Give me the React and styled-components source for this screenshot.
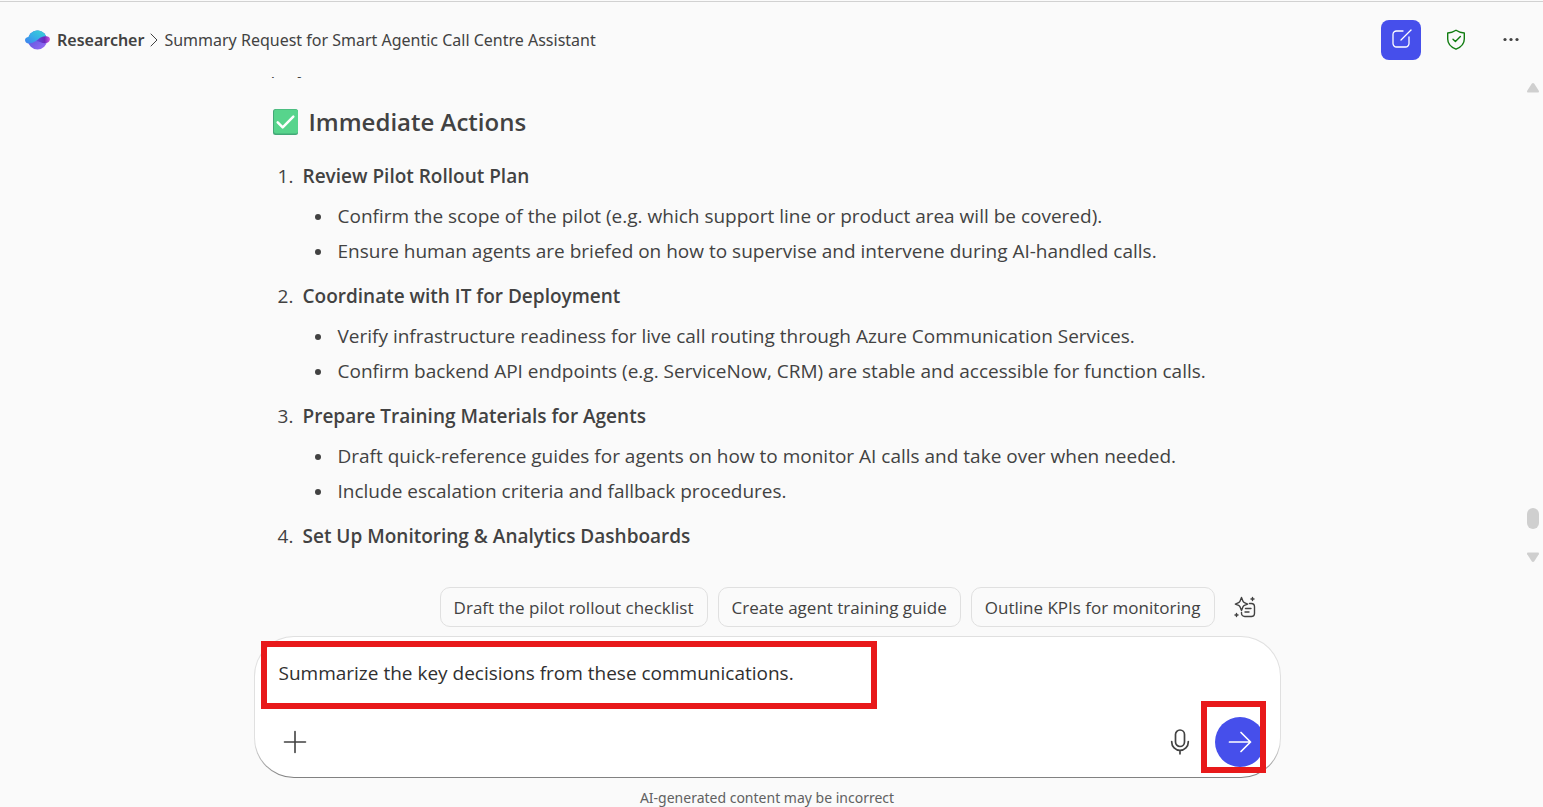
import React, { useState } from "react";
import styled, { createGlobalStyle } from "styled-components";

const GlobalStyle = createGlobalStyle`
  *, *::before, *::after { box-sizing: border-box; }
  body {
    margin: 0;
    background: #fafafa;
    color: #424242;
    font-family: "Segoe UI", "Open Sans", "Noto Sans", sans-serif;
    font-size: 19px;
    line-height: 30px;
  }
  button { font: inherit; color: inherit; cursor: pointer; }
`;

const Shell = styled.div`
  display: flex;
  flex-direction: column;
  height: 100vh;
  padding-top: 1px;
  overflow: hidden;
`;

const Header = styled.header`
  display: flex;
  align-items: center;
  justify-content: space-between;
  height: 76px;
  flex: none;
  padding: 0 12px 0 24px;
  border-top: 1px solid #d1d1d1;
`;

const Breadcrumb = styled.nav`
  display: flex;
  align-items: center;
  font-family: "Segoe UI", "Noto Sans", sans-serif;
  font-size: 16px;
  line-height: 24px;
  white-space: nowrap;
`;

const AgentLink = styled.a`
  display: flex;
  align-items: center;
  gap: 7px;
  color: inherit;
  font-weight: 600;
  text-decoration: none;
`;

const Chevron = styled.svg`
  width: 8px;
  height: 14px;
  margin: 0 6px;
`;

const ChatTitle = styled.h1`
  margin: 0;
  font-size: inherit;
  font-weight: 400;
`;

const HeaderActions = styled.div`
  display: flex;
  gap: 15px;
`;

const IconButton = styled.button`
  display: grid;
  place-items: center;
  width: ${(p) => p.$size || 40}px;
  height: ${(p) => p.$size || 40}px;
  padding: 0;
  border: 0;
  border-radius: ${(p) => (p.$round ? "50%" : "8px")};
  background: ${(p) => (p.$primary ? "#464feb" : "transparent")};
  color: ${(p) => (p.$primary ? "#ffffff" : p.$tint || "#424242")};
`;

const Body = styled.div`
  display: flex;
  flex: 1;
  min-height: 0;
`;

const Transcript = styled.main`
  flex: 1;
  min-width: 0;
  overflow: hidden;
  padding-left: 11px;
`;

const Column = styled.div`
  position: relative;
  width: 100%;
  max-width: 1027px;
  margin: 0 auto;
`;

const Message = styled.article`
  padding: 0 17px;
`;

const PreviousLine = styled.p`
  margin: -25px 0 0;
`;

const SectionTitle = styled.h2`
  display: flex;
  align-items: center;
  gap: 11px;
  margin: 21px 0 20px;
  padding-left: 2px;
  font-size: 24px;
  font-weight: 600;
  line-height: 38px;
`;

const Steps = styled.ol`
  display: grid;
  gap: 15px;
  margin: 0;
  padding: 0 0 0 7px;
  list-style: none;
  counter-reset: step;
`;

const Step = styled.li`
  display: grid;
  grid-template-columns: 25px 1fr;
  counter-increment: step;
  &::before { content: counter(step) "."; }
`;

const StepTitle = styled.h3`
  margin: 0;
  font-size: inherit;
  font-weight: 600;
`;

const Points = styled.ul`
  display: grid;
  gap: 5px;
  margin: 10px 0 0;
  padding: 0 0 0 12px;
  list-style: none;
`;

const Point = styled.li`
  display: grid;
  grid-template-columns: 23px 1fr;
  align-items: start;
  &::before {
    content: "";
    width: 6px;
    height: 6px;
    margin-top: 13px;
    border-radius: 50%;
    background: #424242;
  }
`;

const ScrollRail = styled.div`
  display: flex;
  flex-direction: column;
  align-items: center;
  width: 20px;
  flex: none;
  padding: 5px 0 4px;
`;

const ScrollThumb = styled.div`
  width: 12px;
  height: 21px;
  margin: auto 0 23px;
  border-radius: 6px;
  background: #cfcfcf;
`;

const Footer = styled.footer`
  flex: none;
  padding: 20px 9px 0 0;
`;

const Suggestions = styled.div`
  display: flex;
  align-items: center;
  justify-content: flex-end;
  gap: 10px;
  padding-right: 16px;
  margin-bottom: 9px;
`;

const Chip = styled.button`
  height: 40px;
  padding: 2px 13px 0;
  border: 1px solid #e0e0e0;
  border-radius: 10px;
  background: #fafafa;
  font-size: 17px;
  line-height: 24px;
  white-space: nowrap;
`;

const Composer = styled.form`
  position: relative;
  padding: 21px 15px 10px 24px;
  border: 1px solid transparent;
  border-radius: 40px;
  background:
    linear-gradient(#ffffff, #ffffff) padding-box,
    linear-gradient(#e0e0e0 75%, #808080) border-box;
`;

const Prompt = styled.textarea`
  display: block;
  width: 100%;
  height: 30px;
  margin-bottom: 29px;
  padding: 0;
  border: 0;
  outline: 0;
  resize: none;
  overflow: hidden;
  background: transparent;
  color: #303030;
  font: inherit;
`;

const Toolbar = styled.div`
  display: flex;
  align-items: center;
  gap: 19px;
`;

const Spacer = styled.span`
  flex: 1;
`;

const Highlight = styled.div`
  position: absolute;
  border: 6px solid #e8191a;
  pointer-events: none;
`;

const PromptHighlight = styled(Highlight)`
  left: 6px;
  top: 4px;
  width: 616px;
  height: 68px;
`;

const SendHighlight = styled(Highlight)`
  right: 14px;
  bottom: 4px;
  width: 65px;
  height: 72px;
`;

const Disclaimer = styled.p`
  margin: 11px 0 0;
  color: #616161;
  font-family: "Segoe UI", "Noto Sans", sans-serif;
  font-size: 14px;
  line-height: 18px;
  text-align: center;
`;

const steps = [
  {
    title: "Review Pilot Rollout Plan",
    points: [
      "Confirm the scope of the pilot (e.g. which support line or product area will be covered).",
      "Ensure human agents are briefed on how to supervise and intervene during AI-handled calls.",
    ],
  },
  {
    title: "Coordinate with IT for Deployment",
    points: [
      "Verify infrastructure readiness for live call routing through Azure Communication Services.",
      "Confirm backend API endpoints (e.g. ServiceNow, CRM) are stable and accessible for function calls.",
    ],
  },
  {
    title: "Prepare Training Materials for Agents",
    points: [
      "Draft quick-reference guides for agents on how to monitor AI calls and take over when needed.",
      "Include escalation criteria and fallback procedures.",
    ],
  },
  { title: "Set Up Monitoring & Analytics Dashboards", points: [] },
];

const suggestions = [
  "Draft the pilot rollout checklist",
  "Create agent training guide",
  "Outline KPIs for monitoring",
];

const stroke = {
  fill: "none",
  stroke: "currentColor",
  strokeLinecap: "round",
  strokeLinejoin: "round",
  "aria-hidden": true,
};

const PlanetLogo = () => (
  <svg width="26" height="20" viewBox="0 0 26 20" aria-hidden="true">
    <defs>
      <linearGradient id="sky" x1="0" y1="1" x2="1" y2="0">
        <stop offset="0" stopColor="#3f7df0" />
        <stop offset="0.5" stopColor="#36b1e6" />
        <stop offset="1" stopColor="#3bd5d3" />
      </linearGradient>
      <linearGradient id="dusk" x1="0" y1="0" x2="1" y2="1">
        <stop offset="0" stopColor="#4a50d8" />
        <stop offset="1" stopColor="#9b6cf5" />
      </linearGradient>
      <linearGradient id="ring" x1="0" y1="0" x2="1" y2="0">
        <stop offset="0" stopColor="#5b4ddd" />
        <stop offset="0.6" stopColor="#6a29bd" />
        <stop offset="1" stopColor="#d65be0" />
      </linearGradient>
    </defs>
    <circle cx="13.500" cy="10" r="9.500" fill="url(#dusk)" />
    <path d="M4.500 7C6 3 9.500.5 13.500.5c4 0 7.200 2.300 8.600 5.700-4 .2-6.600 2-9.600 4.300-3 2.200-5.800 3.300-8.300 3C2 13 1 11.500 1 10c0-1.800 1.500-2.800 3.500-3z" fill="url(#sky)" />
    <path d="M22.100 6.200c2.400 0 3.900 1.200 3.900 3 0 2.400-2.200 3.500-4.200 3.900-4.500.3-5.500-1.600-9.300-2.200 1.900-1.300 3.800-4.700 9.600-4.700z" fill="url(#ring)" />
  </svg>
);

const ComposeIcon = () => (
  <svg width="22" height="22" viewBox="0 0 22 22" strokeWidth="1.300" {...stroke}>
    <path d="M13 2H6.500A3.500 3.500 0 0 0 3 5.500v9A3.500 3.500 0 0 0 6.500 18h9a3.500 3.500 0 0 0 3.500-3.500V8" />
    <path d="M11 11 21 1" />
  </svg>
);

const ShieldIcon = () => (
  <svg width="20" height="22" viewBox="0 0 20 22" strokeWidth="1.400" {...stroke}>
    <path d="M10 1.200c2.400 1.700 5 2.600 8.300 2.800v6c0 4.600-2.800 8-8.300 10.200C4.500 18 1.700 14.600 1.700 10V4C5 3.800 7.600 2.900 10 1.200z" />
    <path d="m7 10.300 2.400 2.300 5-5" />
  </svg>
);

const MoreIcon = () => (
  <svg width="18" height="6" viewBox="0 0 18 6" fill="currentColor" aria-hidden="true">
    <circle cx="3" cy="2.500" r="1.600" />
    <circle cx="9" cy="2.500" r="1.600" />
    <circle cx="15" cy="2.500" r="1.600" />
  </svg>
);

const CheckBadge = () => (
  <svg width="25" height="26" viewBox="0 0 25 26" aria-hidden="true">
    <rect width="25" height="26" rx="2.500" fill="#43a877" />
    <rect x="1" y="0.500" width="24" height="24" rx="2" fill="#57d48c" />
    <path d="m4.700 13.300 5 5L20.300 7.700" fill="none" stroke="#fff" strokeWidth="2.500" strokeLinecap="round" strokeLinejoin="round" />
  </svg>
);

const PromptIdeasIcon = () => (
  <svg width="22" height="22" viewBox="0 0 22 22" strokeWidth="1.400" {...stroke}>
    <path d="M7.500 1.500 9 5.300q.4 1 1.400 1.400l3.300 1.400-3.300 1.300Q9.400 9.800 9 10.800l-1.500 3.700L6 10.800q-.4-1-1.400-1.400L1.300 8.100l3.300-1.400Q5.600 6.300 6 5.300z" />
    <path d="M15.500 7.500h1.800a3.200 3.200 0 0 1 3.200 3.200v6.600a3.200 3.200 0 0 1-3.200 3.200h-6.600a3.200 3.200 0 0 1-3.200-3.200v-.8M11.500 12.500h5.500M11 16h4" />
    <path d="M18.500 1.500v3M17 3h3M2.500 17.500v3M1 19h3" />
  </svg>
);

const PlusIcon = () => (
  <svg width="24" height="24" viewBox="0 0 24 24" strokeWidth="1.600" {...stroke}>
    <path d="M12 1.500v21M1.500 12h21" />
  </svg>
);

const MicIcon = () => (
  <svg width="20" height="26" viewBox="0 0 20 26" strokeWidth="1.700" {...stroke}>
    <rect x="5.500" y="1" width="9" height="16.500" rx="4.500" />
    <path d="M1.700 12.500v.5a8.300 8.300 0 0 0 16.600 0v-.5M10 21.300v3.500" />
  </svg>
);

const SendIcon = () => (
  <svg width="24" height="22" viewBox="0 0 24 22" strokeWidth="1.700" {...stroke}>
    <path d="M1.500 11h21M13 1.500l9.500 9.500-9.500 9.500" />
  </svg>
);

const ScrollArrow = ({ down }) => (
  <svg width="14" height="11" viewBox="0 0 14 11" fill="#cfcfcf" aria-hidden="true">
    <path d={down ? "M1.800.5h10.400q1.300.3.600 1.700L8.300 9.300q-1.300 1.500-2.600 0L1.200 2.200Q.5.800 1.800.5z" : "M1.800 10.500h10.400q1.300-.3.600-1.700L8.300 1.700Q7 .2 5.700 1.700L1.200 8.800q-.7 1.400.6 1.700z"} />
  </svg>
);

export default function App() {
  const [prompt, setPrompt] = useState("Summarize the key decisions from these communications.");

  return (
    <Shell>
      <GlobalStyle />
      <Header>
        <Breadcrumb aria-label="Breadcrumb">
          <AgentLink href="#researcher">
            <PlanetLogo />
            Researcher
          </AgentLink>
          <Chevron viewBox="0 0 8 14" {...stroke}>
            <path d="m1 1 6 6-6 6" />
          </Chevron>
          <ChatTitle>Summary Request for Smart Agentic Call Centre Assistant</ChatTitle>
        </Breadcrumb>
        <HeaderActions>
          <IconButton type="button" $primary aria-label="New chat"><ComposeIcon /></IconButton>
          <IconButton type="button" $tint="#107c10" aria-label="Data protection"><ShieldIcon /></IconButton>
          <IconButton type="button" aria-label="More options"><MoreIcon /></IconButton>
        </HeaderActions>
      </Header>

      <Body>
        <Transcript>
          <Column>
            <Message>
              <PreviousLine>play</PreviousLine>
              <SectionTitle>
                <CheckBadge />
                Immediate Actions
              </SectionTitle>
              <Steps>
                {steps.map((step) => (
                  <Step key={step.title}>
                    <div>
                      <StepTitle>{step.title}</StepTitle>
                      {step.points.length > 0 && (
                        <Points>
                          {step.points.map((point) => (
                            <Point key={point}>{point}</Point>
                          ))}
                        </Points>
                      )}
                    </div>
                  </Step>
                ))}
              </Steps>
            </Message>
          </Column>
        </Transcript>
        <ScrollRail aria-hidden="true">
          <ScrollArrow />
          <ScrollThumb />
          <ScrollArrow down />
        </ScrollRail>
      </Body>

      <Footer>
        <Column>
          <Suggestions>
            {suggestions.map((text) => (
              <Chip type="button" key={text}>{text}</Chip>
            ))}
            <IconButton type="button" aria-label="View prompts"><PromptIdeasIcon /></IconButton>
          </Suggestions>
          <Composer onSubmit={(e) => e.preventDefault()}>
            <Prompt
              aria-label="Message Researcher"
              rows={1}
              value={prompt}
              onChange={(e) => setPrompt(e.target.value)}
            />
            <Toolbar>
              <IconButton type="button" $size={32} aria-label="Add content"><PlusIcon /></IconButton>
              <Spacer />
              <IconButton type="button" $size={32} aria-label="Dictate"><MicIcon /></IconButton>
              <IconButton type="submit" $size={50} $round $primary aria-label="Send"><SendIcon /></IconButton>
            </Toolbar>
            <PromptHighlight />
            <SendHighlight />
          </Composer>
          <Disclaimer>AI-generated content may be incorrect</Disclaimer>
        </Column>
      </Footer>
    </Shell>
  );
}
